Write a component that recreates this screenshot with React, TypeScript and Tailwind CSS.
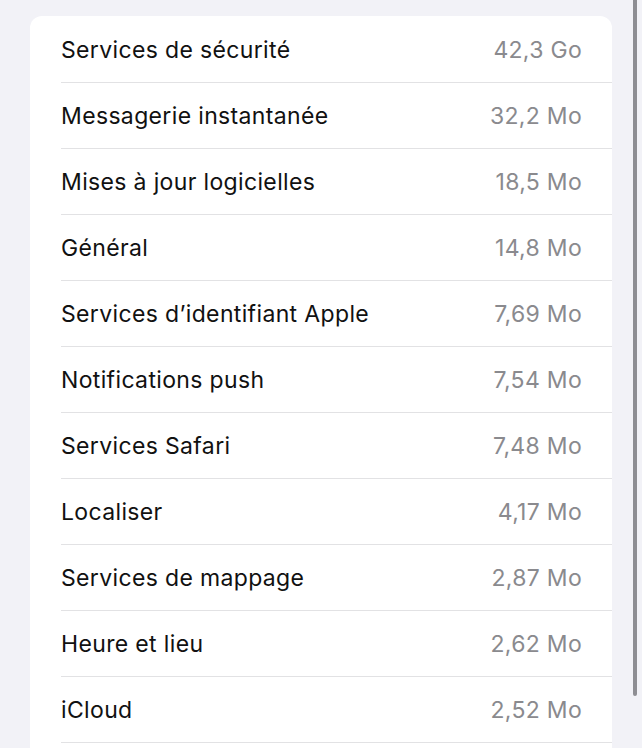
const rows: [string, string][] = [
  ["Services de sécurité", "42,3 Go"],
  ["Messagerie instantanée", "32,2 Mo"],
  ["Mises à jour logicielles", "18,5 Mo"],
  ["Général", "14,8 Mo"],
  ["Services d’identifiant Apple", "7,69 Mo"],
  ["Notifications push", "7,54 Mo"],
  ["Services Safari", "7,48 Mo"],
  ["Localiser", "4,17 Mo"],
  ["Services de mappage", "2,87 Mo"],
  ["Heure et lieu", "2,62 Mo"],
  ["iCloud", "2,52 Mo"],
];

export default function App() {
  return (
    <div
      className="relative h-[748px] w-full overflow-hidden bg-[#f2f2f7] pl-[30px] pr-[30px] pt-[16px]"
      style={{ fontFamily: "Inter, 'Noto Sans', sans-serif" }}
    >
      <div className="overflow-hidden rounded-t-[12px] bg-white">
        {rows.map(([label, value], i) => (
          <div key={label} className="flex h-[66px] flex-col pl-[31px]">
            {i > 0 && <div className="h-px bg-[#e2e2e4]" />}
            <div className="flex flex-1 items-center justify-between pr-[30px] pt-[2px]">
              <span className="text-[23px] tracking-[0.35px] text-[#111]">{label}</span>
              <span className="text-[23px] tracking-[0.3px] text-[#8a8a8e]">{value}</span>
            </div>
          </div>
        ))}
        <div className="h-[20px] pl-[31px]">
          <div className="h-px bg-[#e2e2e4]" />
        </div>
      </div>
      <div className="absolute right-[5px] top-0 h-[696px] w-[4px] rounded-b-full bg-[#8e8e93]" />
    </div>
  );
}
